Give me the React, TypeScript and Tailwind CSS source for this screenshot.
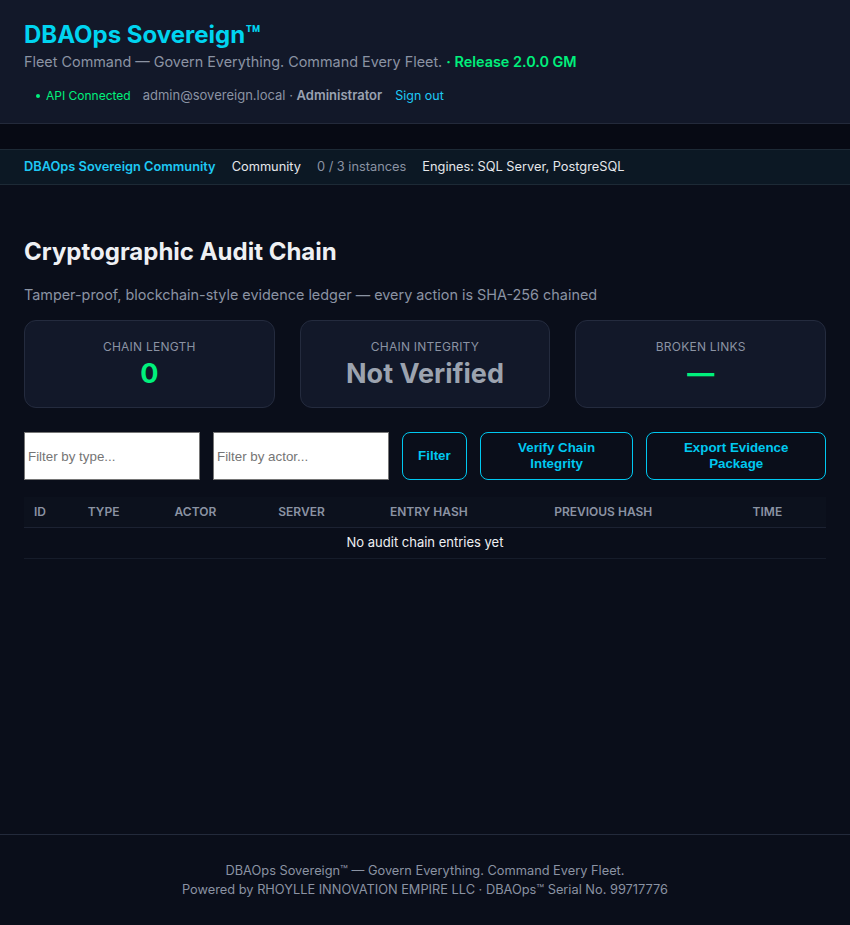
import React from "react";

const COLUMNS = ["ID", "Type", "Actor", "Server", "Entry Hash", "Previous Hash", "Time"];

function StatCard({ label, value, valueClass }: { label: string; value: string; valueClass: string }) {
  return (
    <div className="flex h-[88px] flex-col items-center justify-center rounded-xl border border-[#242b3e] bg-[#121829]">
      <p className="text-[12px] uppercase tracking-[0.02em] text-[#8b93a3]">{label}</p>
      <p className={`mt-[2px] text-[27px] font-bold leading-[32px] ${valueClass}`}>{value}</p>
    </div>
  );
}

export default function App() {
  return (
    <div className="flex min-h-[925px] flex-col bg-[#0a0e1a] font-['Inter',sans-serif]">
      {/* Header */}
      <header className="border-b border-[#232a3b] bg-[#121829] px-6 pb-[17px] pt-[20px]">
        <h1 className="text-[24px] font-bold leading-[30px] text-[#00d4f0]">DBAOps Sovereign™</h1>
        <p className="mt-[2px] text-[14.4px] leading-[20px] text-[#8b93a3]">
          Fleet Command — Govern Everything. Command Every Fleet.{" "}
          <span className="font-semibold text-[#00f07c]">· Release 2.0.0 GM</span>
        </p>
        <div className="mt-[14px] flex h-[20px] items-center pl-3 text-[13px]">
          <span className="flex items-center gap-[6px] text-[12px] text-[#00f07c]">
            <span className="inline-block h-[4px] w-[4px] rounded-full bg-[#00f07c]" />
            API Connected
          </span>
          <span className="ml-3 text-[#8b93a3]">
            admin@sovereign.local · <b className="font-semibold text-[#9aa2b1]">Administrator</b>
          </span>
          <span className="ml-[13px] text-[12.5px] text-[#1ec8f5]">Sign out</span>
        </div>
      </header>

      <div className="h-[25px] bg-[#070a14]" />

      {/* License bar */}
      <div className="flex h-[36px] items-center gap-4 border-y border-[#1d2a36] bg-[#0c1824] px-6 text-[12.8px]">
        <span className="font-semibold text-[#1ec8f5]">DBAOps Sovereign Community</span>
        <span className="text-[#e5e7eb]">Community</span>
        <span className="text-[#8b93a3]">0 / 3 instances</span>
        <span className="text-[#e5e7eb]">Engines: SQL Server, PostgreSQL</span>
      </div>

      <main className="flex-1 px-6 pt-[52px]">
        <h2 className="text-[24px] font-bold leading-[30px] text-[#eef0f3]">Cryptographic Audit Chain</h2>
        <p className="mt-[18px] text-[14.4px] leading-[20px] text-[#8b93a3]">
          Tamper-proof, blockchain-style evidence ledger — every action is SHA-256 chained
        </p>

        <div className="mt-[15px] grid grid-cols-3 gap-[25px]">
          <StatCard label="Chain Length" value="0" valueClass="text-[#00f07c]" />
          <StatCard label="Chain Integrity" value="Not Verified" valueClass="text-[#9ca3af]" />
          <StatCard label="Broken Links" value="—" valueClass="text-[#00f07c]" />
        </div>

        <div className="mt-[24px] flex items-center gap-[13px]">
          <input
            placeholder="Filter by type..."
            className="h-[48px] w-[176px] border border-[#767676] bg-white px-[3px] font-['Liberation_Sans',sans-serif] text-[13.33px] text-black placeholder:text-[#757575]"
          />
          <input
            placeholder="Filter by actor..."
            className="h-[48px] w-[176px] border border-[#767676] bg-white px-[3px] font-['Liberation_Sans',sans-serif] text-[13.33px] text-black placeholder:text-[#757575]"
          />
          <button className="h-[48px] w-[65px] rounded-lg border border-[#00c8f0] font-['Liberation_Sans',sans-serif] text-[13.33px] font-bold text-[#00c8f0]">
            Filter
          </button>
          <button className="h-[48px] w-[154px] rounded-lg border border-[#00c8f0] px-4 font-['Liberation_Sans',sans-serif] text-[13.33px] font-bold leading-[16px] text-[#00c8f0]">
            Verify Chain Integrity
          </button>
          <button className="h-[48px] w-[180px] rounded-lg border border-[#00c8f0] px-6 font-['Liberation_Sans',sans-serif] text-[13.33px] font-bold leading-[16px] text-[#00c8f0]">
            Export Evidence Package
          </button>
        </div>

        <table className="mt-[17px] w-full border-collapse text-[12px]">
          <thead>
            <tr className="h-[30px] border-b border-[#1c2232] bg-[#0c111d]">
              {COLUMNS.map((c) => (
                <th key={c} className="px-[10px] text-left font-semibold uppercase text-[#8b93a3]">
                  {c}
                </th>
              ))}
            </tr>
          </thead>
          <tbody>
            <tr className="h-[31px] border-b border-[#161c2a]">
              <td colSpan={7} className="text-center text-[13px] text-[#eef0f3]">
                No audit chain entries yet
              </td>
            </tr>
          </tbody>
        </table>
      </main>

      <footer className="border-t border-[#232a3b] pb-[26px] pt-[26px] text-center text-[12.8px] leading-[19px] text-[#8b93a3]">
        <p>DBAOps Sovereign™ — Govern Everything. Command Every Fleet.</p>
        <p>Powered by RHOYLLE INNOVATION EMPIRE LLC · DBAOps™ Serial No. 99717776</p>
      </footer>
    </div>
  );
}
